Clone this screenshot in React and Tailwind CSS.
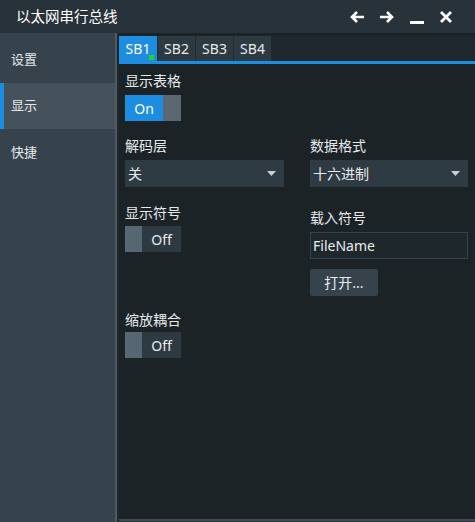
import React from 'react';

const FONT = { fontFamily: '"Noto Sans", "Noto Sans CJK SC", sans-serif' };

// ─── Переключатель On/Off ─────────────────────────────────────────────
function Toggle({ on }) {
  if (on) {
    return (
      <div className="flex h-[26px] w-[56px]">
        <div className="flex w-[38px] items-center justify-center bg-[#1c8de0] text-[14px] text-white">On</div>
        <div className="w-[18px] bg-[#5b6771]" />
      </div>
    );
  }
  return (
    <div className="flex h-[26px] w-[56px]">
      <div className="w-[17px] bg-[#566673]" />
      <div className="flex flex-1 items-center justify-center bg-[#2e3a42] text-[14px] text-[#e6eaec]">Off</div>
    </div>
  );
}

function Select({ value }) {
  return (
    <div className="flex h-[27px] items-center justify-between bg-[#2f3b43] pl-[3px] pr-[8px] text-[14px] text-[#e8ecee]">
      <span>{value}</span>
      <svg width="9" height="5" viewBox="0 0 9 5"><path d="M0 0h9L4.5 5z" fill="#c9d0d4" /></svg>
    </div>
  );
}

function Label({ children, className = '' }) {
  return <div className={`text-[14px] leading-[18px] text-[#e6eaec] ${className}`}>{children}</div>;
}

export default function App() {
  return (
    <div className="flex h-[522px] w-[475px] flex-col bg-[#27323a]" style={FONT}>
      {/* заголовок */}
      <div className="flex h-[33px] shrink-0 items-center justify-between pl-[16px] pr-[22px]">
        <span className="text-[14.5px] text-white">以太网串行总线</span>
        <div className="flex items-center gap-[14px]">
          <svg width="16" height="14" viewBox="0 0 16 14"><path d="M15 7H3M8 2L3 7l5 5" stroke="#fff" strokeWidth="2.6" fill="none" /></svg>
          <svg width="16" height="14" viewBox="0 0 16 14"><path d="M1 7h12M8 2l5 5-5 5" stroke="#fff" strokeWidth="2.6" fill="none" /></svg>
          <svg width="16" height="14" viewBox="0 0 16 14"><path d="M1 12.5h14" stroke="#fff" strokeWidth="3" /></svg>
          <svg width="14" height="14" viewBox="0 0 14 14"><path d="M2 2l10 10M12 2L2 12" stroke="#fff" strokeWidth="2.8" /></svg>
        </div>
      </div>

      <div className="flex min-h-0 flex-1">
        {/* боковое меню */}
        <div className="flex w-[115px] shrink-0 flex-col bg-[#36434c] pt-[3px] text-[13px] text-[#e6eaec]">
          <div className="flex h-[47px] items-center pl-[11px]">设置</div>
          <div className="flex h-[46px] items-center border-l-[4px] border-[#1c8de0] bg-[#45525c] pl-[7px]">显示</div>
          <div className="flex h-[47px] items-center pl-[11px]">快捷</div>
        </div>
        <div className="w-[2px] bg-[#4c5a64]" />
        <div className="w-[2px] bg-[#1f282c]" />

        {/* содержимое */}
        <div className="mb-[1px] flex min-w-0 flex-1 flex-col border-b-[2px] border-[#3d4a52] bg-[#1b2326]">
          <div className="mt-[3px] flex h-[25px] shrink-0 bg-[#27323a]">
            <div className="relative flex w-[38px] items-center justify-center bg-[#1c8de0] text-[14px] text-white">
              SB1
              <span className="absolute bottom-[1px] right-[3px] h-[5px] w-[5px] bg-[#22d32a]" />
            </div>
            {['SB2', 'SB3', 'SB4'].map((t) => (
              <div key={t} className="flex w-[38px] items-center justify-center border-l border-[#222b30] bg-[#2e3a42] text-[14px] text-[#e6eaec]">{t}</div>
            ))}
            <div className="flex-1 bg-[#1f282c]" />
          </div>
          <div className="h-[3px] shrink-0 bg-[#1c8de0]" />

          <div className="flex flex-col px-[6px] pt-[8px]">
            <Label>显示表格</Label>
            <div className="mt-[5px]"><Toggle on /></div>

            <div className="mt-[16px] grid grid-cols-2 gap-x-[26px]">
              <div>
                <Label>解码层</Label>
                <div className="mt-[5px]"><Select value="关" /></div>
              </div>
              <div className="pr-[1px]">
                <Label>数据格式</Label>
                <div className="mt-[5px]"><Select value="十六进制" /></div>
              </div>
            </div>

            <div className="mt-[17px] grid grid-cols-2 gap-x-[26px]">
              <div>
                <Label>显示符号</Label>
                <div className="mt-[4px]"><Toggle /></div>
              </div>
              <div className="pr-[1px] pt-[5px]">
                <Label>载入符号</Label>
                <div className="mt-[5px] flex h-[27px] items-center border border-[#36434b] bg-[#1e272b] pl-[2px] text-[14px] text-[#e8ecee]">FileName</div>
                <div className="mt-[10px] flex h-[27px] w-[68px] items-center justify-center rounded-[2px] bg-[#36434c] text-[14px] text-[#e8ecee]">打开...</div>
              </div>
            </div>

            <Label className="mt-[15px]">缩放耦合</Label>
            <div className="mt-[3px]"><Toggle /></div>
          </div>
        </div>
      </div>
    </div>
  );
}
